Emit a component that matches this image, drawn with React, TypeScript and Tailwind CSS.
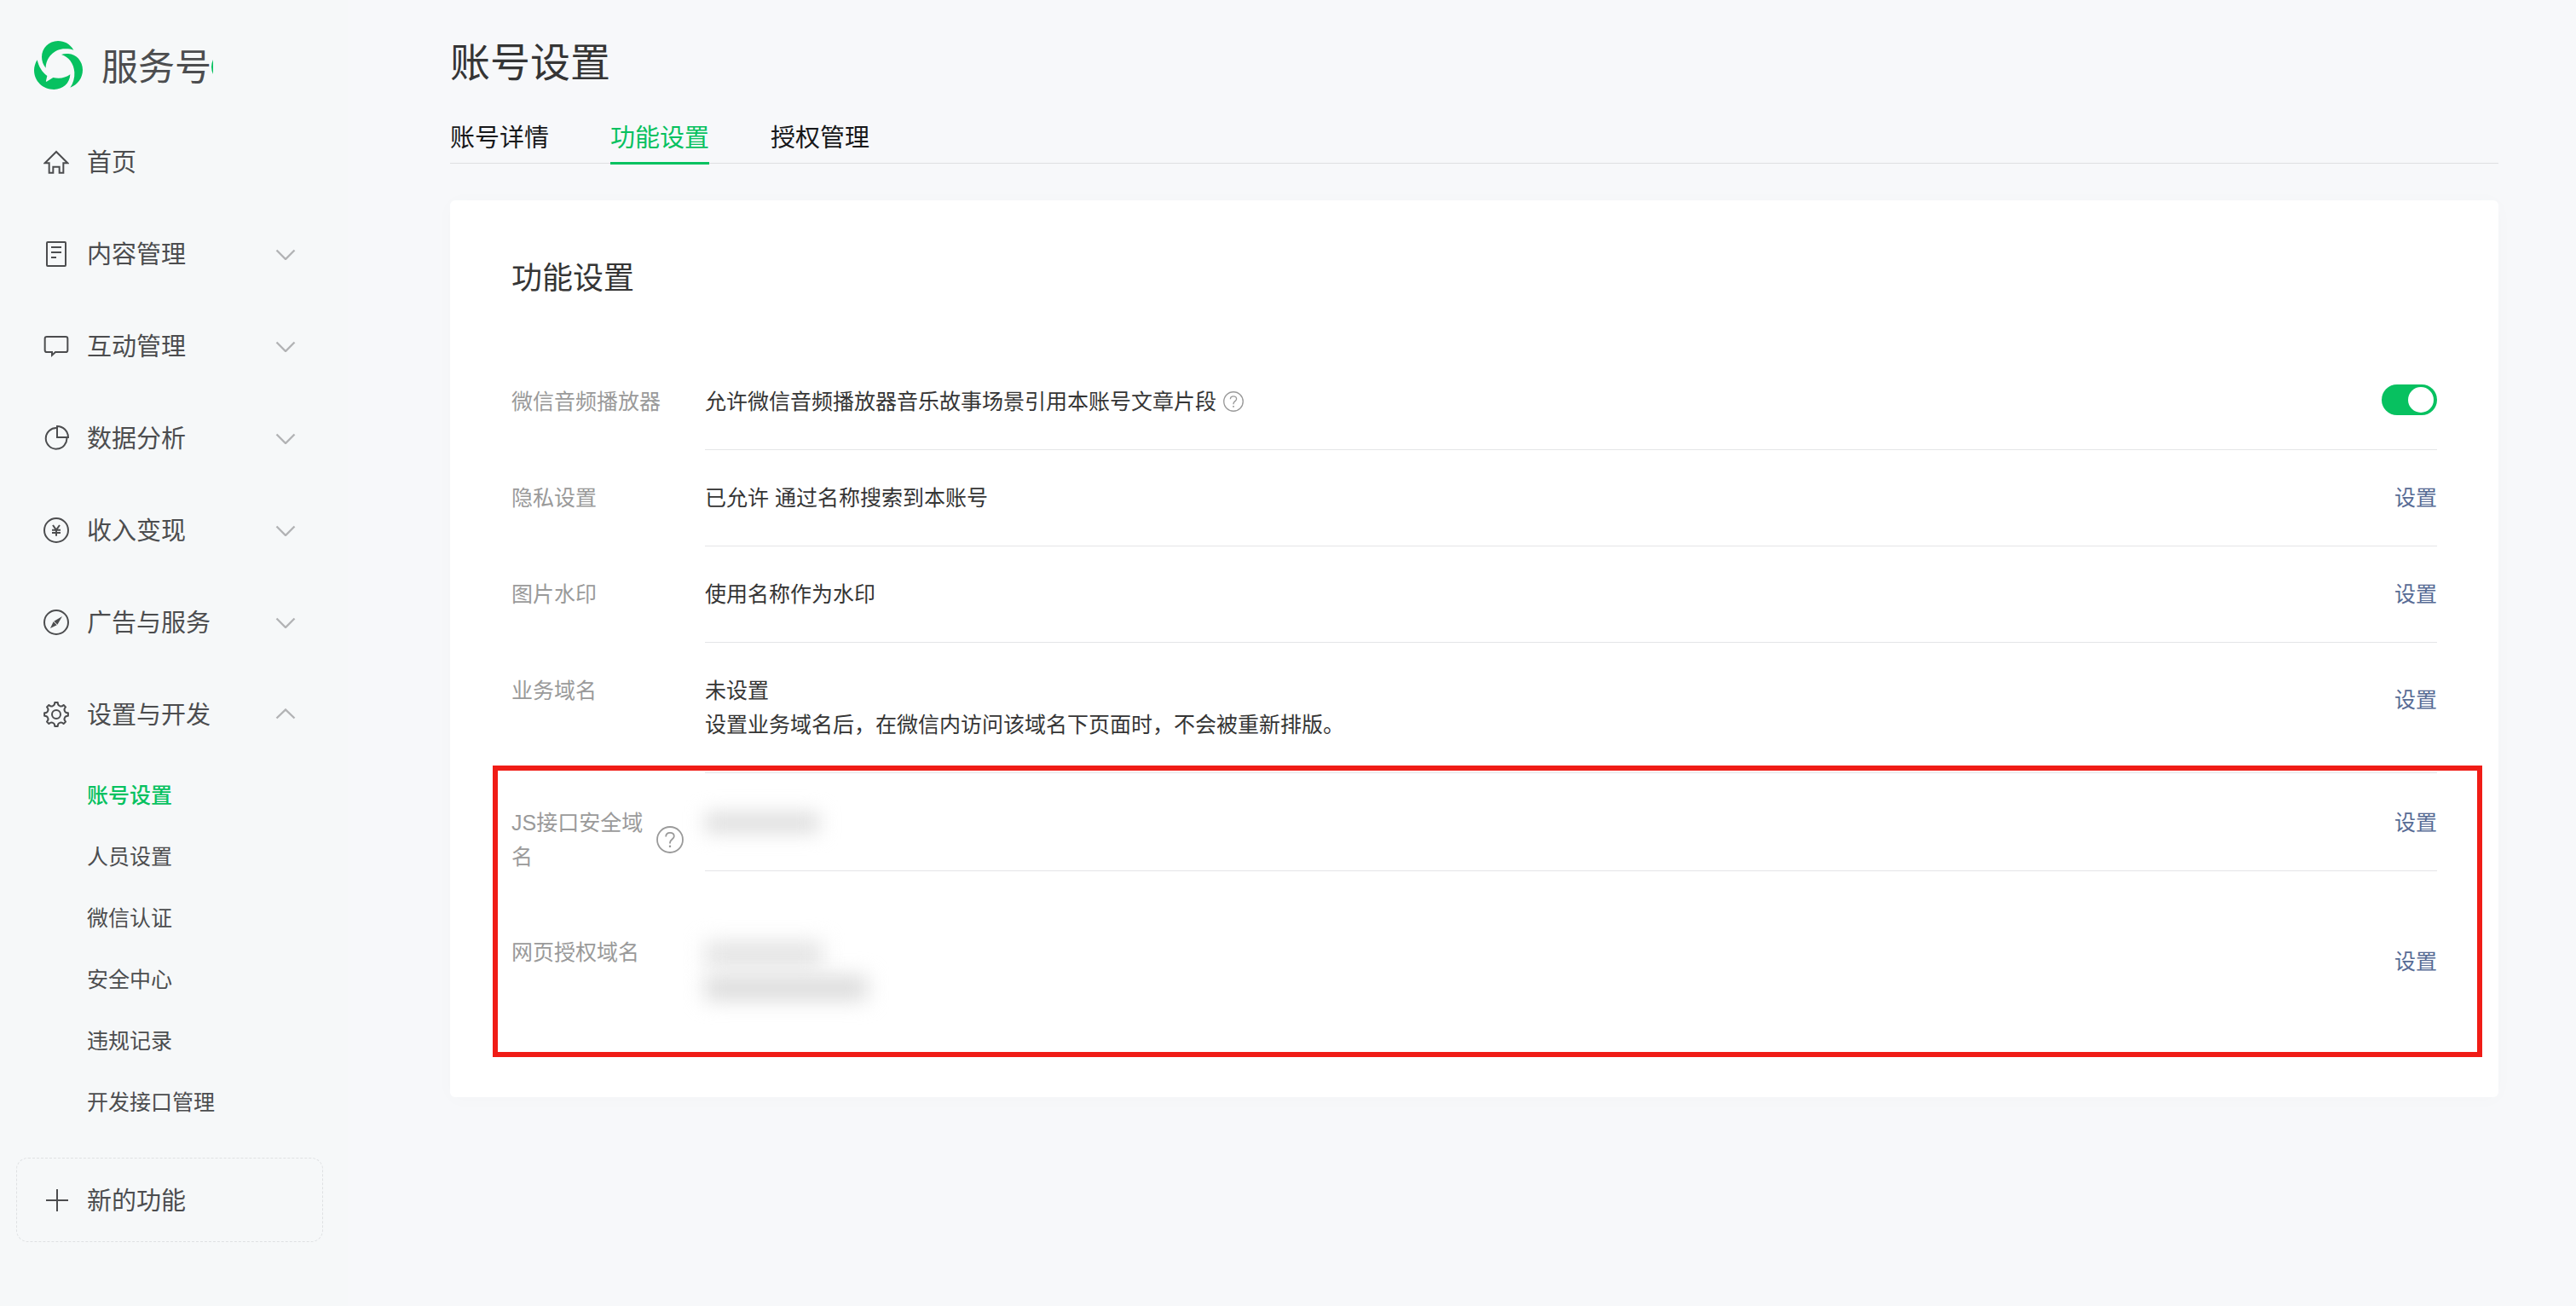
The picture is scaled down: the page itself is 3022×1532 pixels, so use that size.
import React, { useState } from "react";

type IconProps = { children: React.ReactNode };

function NavIcon({ children }: IconProps) {
  return (
    <svg
      viewBox="0 0 90 90"
      className="size-[30px] shrink-0"
      fill="none"
      stroke="currentColor"
      strokeWidth="6"
      aria-hidden="true"
    >
      {children}
    </svg>
  );
}

// Outline of the eight-toothed settings gear, centred in a 90-unit box.
const gearPath = (() => {
  const at = (deg: number, r: number) => {
    const a = (deg * Math.PI) / 180;
    return `${(45 + r * Math.cos(a)).toFixed(1)} ${(45 + r * Math.sin(a)).toFixed(1)}`;
  };
  let d = `M${at(-7, 42)}`;
  for (let i = 0; i < 8; i++) {
    const b = i * 45;
    d += `L${at(b + 7, 42)}Q${at(b + 9, 32)} ${at(b + 22.5, 32)}Q${at(b + 36, 32)} ${at(b + 38, 42)}`;
  }
  return d + "Z";
})();

const icons = {
  home: (
    <NavIcon>
      <path d="M45 9 L5 49 H20 V83 H34 V62 H56 V83 H70 V49 H85 Z" />
    </NavIcon>
  ),
  doc: (
    <NavIcon>
      <rect x="12" y="3" width="66" height="84" rx="3" />
      <path d="M27 21 H63 M27 39 H63 M27 57 H45" />
    </NavIcon>
  ),
  chat: (
    <NavIcon>
      <path d="M12 12 H78 Q85 12 85 19 V59 Q85 66 78 66 H42 L30 77 V66 H12 Q5 66 5 59 V19 Q5 12 12 12 Z" />
    </NavIcon>
  ),
  pie: (
    <NavIcon>
      <path d="M48 9 A37 37 0 1 0 82 42" />
      <path d="M48 3 A39 39 0 0 1 87 42 H48 Z" />
    </NavIcon>
  ),
  yen: (
    <NavIcon>
      <circle cx="45" cy="45" r="42" />
      <path d="M33 27 L45 44 L57 27 M45 44 V65 M30 44 H60 M30 54 H60" />
    </NavIcon>
  ),
  compass: (
    <NavIcon>
      <circle cx="45" cy="45" r="42" />
      <path d="M66 24 L37 41 L49 53 Z" fill="currentColor" stroke="none" />
      <path d="M24 66 L35 43 L47 55 Z" fill="currentColor" stroke="none" />
    </NavIcon>
  ),
  gear: (
    <NavIcon>
      <path d={gearPath} strokeLinejoin="round" />
      <circle cx="45" cy="45" r="15" />
    </NavIcon>
  ),
};

const navItems: { icon: keyof typeof icons; label: string; chevron?: "down" | "up" }[] = [
  { icon: "home", label: "首页" },
  { icon: "doc", label: "内容管理", chevron: "down" },
  { icon: "chat", label: "互动管理", chevron: "down" },
  { icon: "pie", label: "数据分析", chevron: "down" },
  { icon: "yen", label: "收入变现", chevron: "down" },
  { icon: "compass", label: "广告与服务", chevron: "down" },
  { icon: "gear", label: "设置与开发", chevron: "up" },
];

const subItems = ["账号设置", "人员设置", "微信认证", "安全中心", "违规记录", "开发接口管理"];
const tabs = ["账号详情", "功能设置", "授权管理"];

function Chevron({ dir }: { dir: "down" | "up" }) {
  return (
    <svg
      viewBox="0 0 24 14"
      className="h-[14px] w-6 shrink-0"
      fill="none"
      stroke="#b2b3b5"
      strokeWidth="2.4"
      aria-hidden="true"
    >
      <path d={dir === "down" ? "M1.5 2.5 L12 13 L22.5 2.5" : "M1.5 11.5 L12 1.5 L22.5 11.5"} />
    </svg>
  );
}

function Logo() {
  return (
    <svg viewBox="0 0 171 171" className="size-[57px] shrink-0" fill="#07c160" aria-hidden="true">
      <path d="M139 32 C126 10 106 0 84 0 C52 0 27 26 27 56 C27 70 32 84 41 95 C42 58 72 26 112 28 C122 28 131 29 139 32Z" />
      <path d="M96 48 C104 45 112 44 120 45 C149 46 171 72 171 102 C171 131 153 154 127 164 C138 148 143 130 142 110 C140 80 122 56 96 48Z" />
      <path d="M11 67 C4 78 0 91 0 103 C0 142 31 171 70 171 C101 171 126 149 127 118 C110 131 88 134 67 129 L44 143 C42 143 41 142 42 140 L46 123 C28 110 16 90 11 67Z" />
    </svg>
  );
}

function Help({ large }: { large?: boolean }) {
  return (
    <button
      type="button"
      aria-label="帮助"
      className={large ? "size-8 shrink-0 text-[#9a9a9a]" : "size-6 shrink-0 text-[#9a9a9a]"}
    >
      <svg viewBox="0 0 32 32" fill="none" stroke="currentColor" strokeWidth="1.8">
        <circle cx="16" cy="16" r="15" />
        <path d="M11.2 12.4 C11.2 9.4 13.2 7.8 16 7.8 C18.8 7.8 20.8 9.5 20.8 12 C20.8 15.4 16 15.6 16 19.4 V20.4" />
        <path d="M16 22.6 V25" strokeWidth="2.2" />
      </svg>
    </button>
  );
}

type RowProps = {
  label: string;
  help?: boolean;
  divider?: boolean;
  multiline?: boolean;
  action?: React.ReactNode;
  children: React.ReactNode;
};

function Row({ label, help, divider = true, multiline, action, children }: RowProps) {
  return (
    <div className="flex items-start text-[25px] leading-[40px]">
      <dt className="flex w-[227px] shrink-0 items-center gap-2 py-9 text-[#9a9a9a]">
        <span className={help ? "w-[162px]" : ""}>{label}</span>
        {help && <Help large />}
      </dt>
      <dd
        className={
          divider
            ? "flex min-w-0 flex-1 items-start justify-between border-b border-[#e4e5e7] py-9 text-[#353535]"
            : "flex min-w-0 flex-1 items-start justify-between py-9 text-[#353535]"
        }
      >
        <div>{children}</div>
        <div className={multiline ? "shrink-0 pt-[11px]" : "shrink-0"}>
          {action ?? (
            <a href="#set" className="block text-[#576b95]">
              设置
            </a>
          )}
        </div>
      </dd>
    </div>
  );
}

export default function App() {
  const [player, setPlayer] = useState(true);

  return (
    <div className="flex min-h-screen bg-[#f7f8fa] font-['Liberation_Sans','Noto_Sans_CJK_SC',sans-serif]">
      <aside className="w-[408px] shrink-0 bg-[#f6f8f9] text-[#4c4d4f]">
        <div className="flex h-[136px] items-center pt-4 pl-10">
          <Logo />
          <span className="pt-[6px] pl-[22px] text-[43px] leading-[60px]">服务号</span>
          <svg viewBox="0 0 2 17" className="mt-1 h-[17px] w-[2px]" fill="#07c160" aria-hidden="true">
            <path d="M2 0 Q-2 8.5 2 17 Z" />
          </svg>
        </div>

        <nav>
          <ul>
            {navItems.map((item) => (
              <li key={item.label}>
                <button
                  type="button"
                  className="flex h-[108px] w-full items-center pr-[61px] pl-[51px] text-left"
                >
                  {icons[item.icon]}
                  <span className="flex-1 pt-[2px] pl-[21px] text-[29px] leading-[40px]">
                    {item.label}
                  </span>
                  {item.chevron && <Chevron dir={item.chevron} />}
                </button>
              </li>
            ))}
          </ul>
          <ul className="pt-[5px]">
            {subItems.map((label, i) => (
              <li key={label}>
                <a
                  href="#sub"
                  className={
                    i === 0
                      ? "flex h-[72px] items-center pl-[102px] text-[25px] leading-[40px] font-medium text-[#07c160]"
                      : "flex h-[72px] items-center pl-[102px] text-[25px] leading-[40px]"
                  }
                >
                  {label}
                </a>
              </li>
            ))}
          </ul>
        </nav>

        <button
          type="button"
          className="mt-[29px] mr-[29px] mb-[74px] ml-[19px] flex h-[99px] w-[360px] items-center rounded-[14px] border border-dashed border-[#dfe1e3] pl-[33px] text-left"
        >
          <svg
            viewBox="0 0 28 28"
            className="size-7 shrink-0"
            fill="none"
            stroke="currentColor"
            strokeWidth="2"
            aria-hidden="true"
          >
            <path d="M14 1 V27 M1 14 H27" />
          </svg>
          <span className="pt-[2px] pl-[21px] text-[29px] leading-[40px]">新的功能</span>
        </button>
      </aside>

      <main className="min-w-0 flex-1 pr-[91px] pl-[120px]">
        <h1 className="pt-[42px] text-[47px] leading-[64px] text-[#353535]">账号设置</h1>
        <div role="tablist" className="flex h-[86px] items-end gap-[72px] border-b border-[#dfe0e2]">
          {tabs.map((t, i) => (
            <button
              key={t}
              type="button"
              role="tab"
              aria-selected={i === 1}
              className={
                i === 1
                  ? "-mb-[2px] border-b-3 border-[#07c160] pb-2 text-[29px] leading-[40px] text-[#07c160]"
                  : "-mb-[2px] border-b-3 border-transparent pb-2 text-[29px] leading-[40px] text-[#17181a]"
              }
            >
              {t}
            </button>
          ))}
        </div>

        <section className="mt-[43px] rounded-md bg-white px-[72px] pt-[67px] pb-[74px] shadow-[0_2px_24px_rgba(0,0,0,0.02)]">
          <h2 className="text-4xl leading-[50px] text-[#353535]">功能设置</h2>
          <dl className="pt-[63px]">
            <Row
              label="微信音频播放器"
              action={
                <input
                  type="checkbox"
                  role="switch"
                  aria-label="微信音频播放器"
                  checked={player}
                  onChange={(e) => setPlayer(e.target.checked)}
                  className="block h-9 w-[65px] cursor-pointer appearance-none rounded-full bg-[#d9d9d9] px-1 py-[3px] before:block before:size-[30px] before:rounded-full before:bg-white checked:bg-[#07c160] checked:before:ml-auto"
                />
              }
            >
              <span className="flex items-center gap-2">
                允许微信音频播放器音乐故事场景引用本账号文章片段
                <Help />
              </span>
            </Row>
            <Row label="隐私设置">已允许 通过名称搜索到本账号</Row>
            <Row label="图片水印">使用名称作为水印</Row>
            <Row label="业务域名" multiline>
              <p>未设置</p>
              <p>设置业务域名后，在微信内访问该域名下页面时，不会被重新排版。</p>
            </Row>
            <div className="relative mt-[2px]">
              <Row label="JS接口安全域名" help>
                <div className="flex h-10 items-center">
                  <div className="h-6 w-[134px] bg-[#dedede] blur-[11px]" />
                </div>
              </Row>
              <Row label="网页授权域名" divider={false} multiline>
                <div className="flex h-20 flex-col items-start justify-end gap-3 pb-1">
                  <div className="h-7 w-[138px] bg-[#e2e2e2] blur-[12px]" />
                  <div className="h-7 w-[190px] bg-[#dadada] blur-[12px]" />
                </div>
              </Row>
              <div className="pointer-events-none absolute -top-[11px] -right-[53px] -bottom-[27px] -left-[22px] border-6 border-[#f01c16]" />
            </div>
          </dl>
        </section>
      </main>
    </div>
  );
}
